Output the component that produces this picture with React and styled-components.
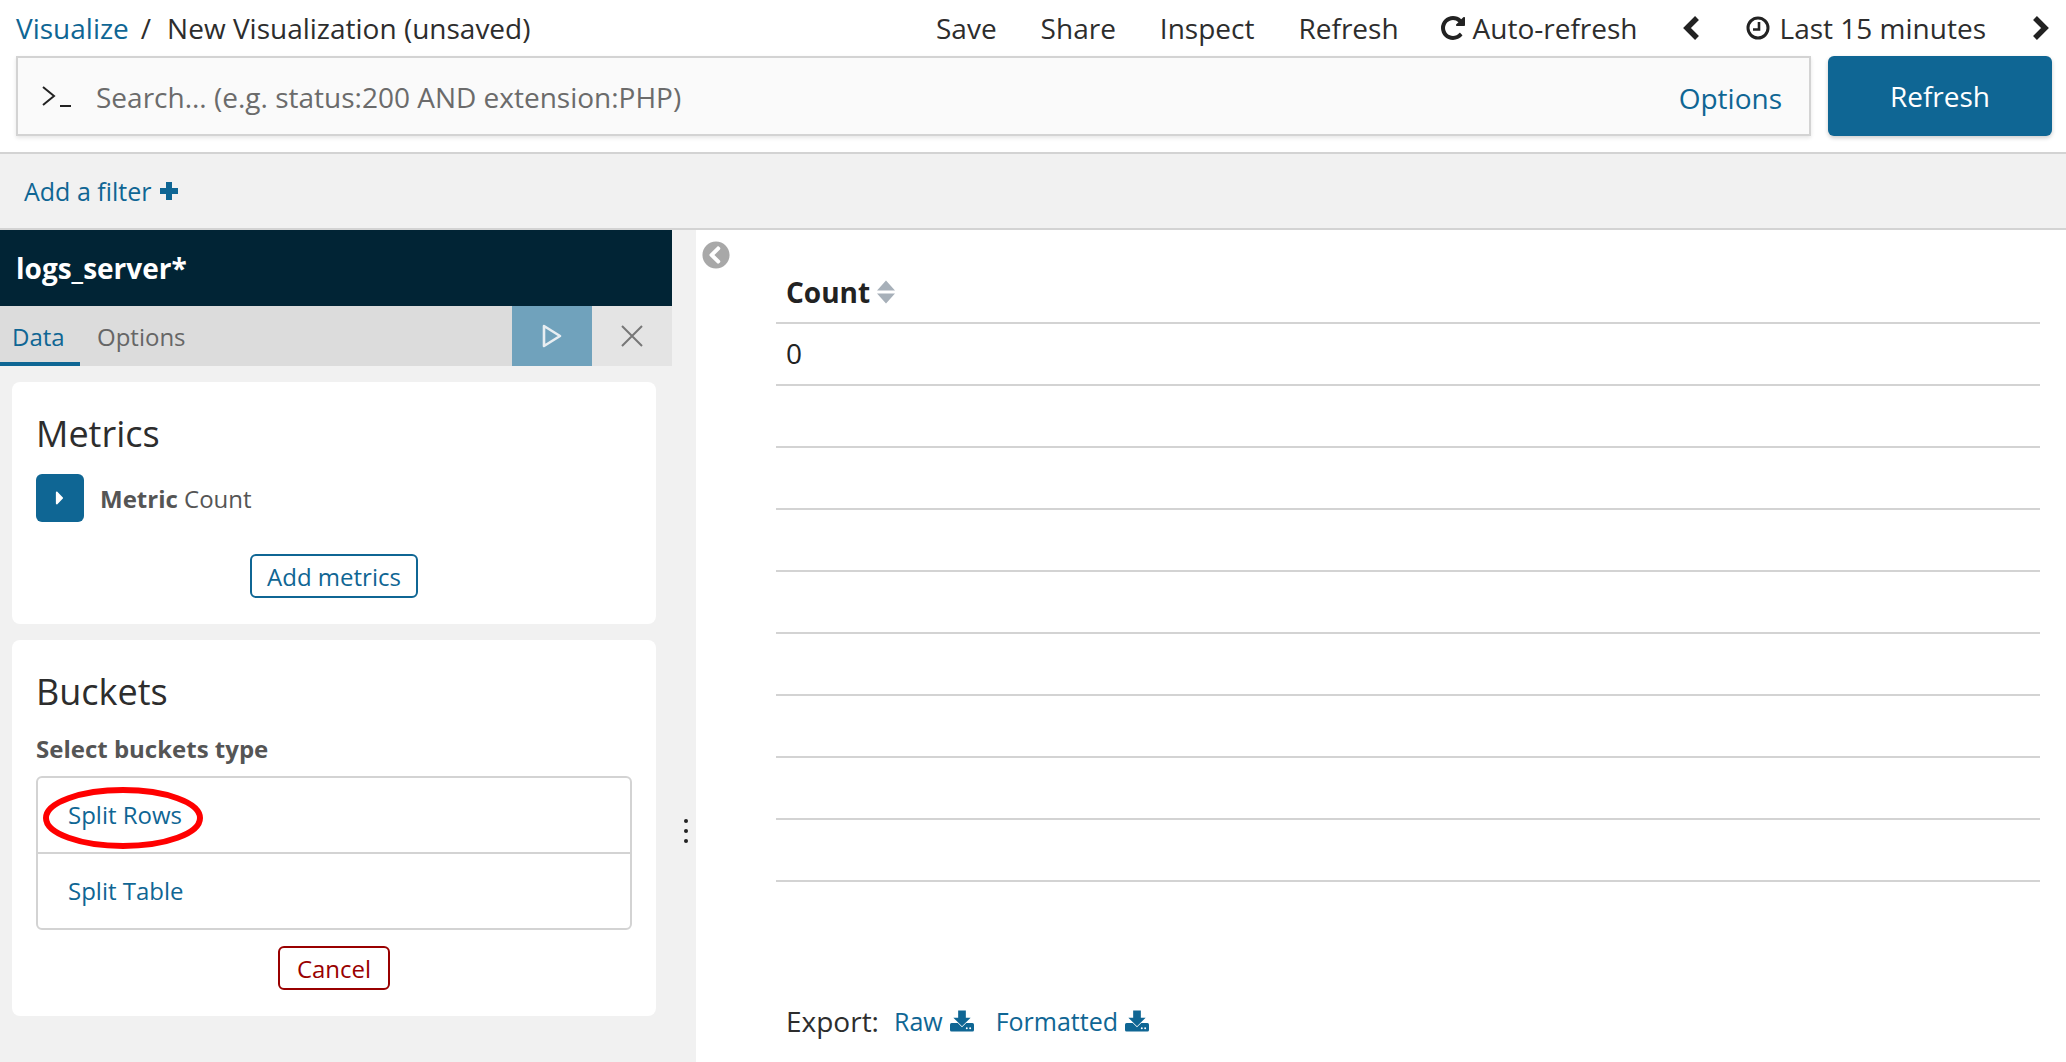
import React from 'react';
import styled, { createGlobalStyle } from 'styled-components';
import { FaChevronCircleLeft, FaCaretRight } from 'react-icons/fa';

const BLUE = '#0f6694';
const TEXT = '#2d2d2d';
const LINE = '#d3d3d3';

const GlobalStyle = createGlobalStyle`
  html, body {
    margin: 0;
    height: 100%;
    overflow: hidden;
    background: #fff;
    font-family: "Open Sans", "Noto Sans", sans-serif;
    color: ${TEXT};
  }
  * { box-sizing: border-box; }
`;

const Page = styled.div`
  width: 2066px;
  height: 1062px;
  display: flex;
  flex-direction: column;
  overflow: hidden;
`;

const TopNav = styled.div`
  height: 56px;
  display: flex;
  align-items: center;
  justify-content: space-between;
  padding: 0 17px 0 16px;
  font-size: 28px;
`;

const Crumbs = styled.div`
  display: flex;
  align-items: center;
  gap: 12px;
`;

const Separator = styled.span`
  margin-right: 4px;
`;

const BlueText = styled.span`
  color: ${BLUE};
`;

const NavItems = styled.div`
  display: flex;
  align-items: center;
  gap: 45px;
`;

const NavLinks = styled.div`
  display: flex;
  align-items: center;
  gap: 44px;
`;

const NavItem = styled.span`
  display: inline-flex;
  align-items: center;
  gap: ${(p) => p.$gap || 8}px;
  margin-left: ${(p) => p.$pull || 0}px;
`;

const SearchRow = styled.div`
  height: 96px;
  display: flex;
  gap: 17px;
  padding: 0 14px 0 16px;
`;

const SearchBox = styled.div`
  flex: 1;
  height: 80px;
  display: flex;
  align-items: center;
  background: #fafafa;
  border: 2px solid ${LINE};
  box-shadow: 0 2px 4px rgba(0, 0, 0, 0.1);
  padding: 0 27px 0 24px;
  font-size: 28px;
`;

const Prompt = styled.svg`
  width: 30px;
  height: 24px;
  margin-right: 24px;
`;

const Placeholder = styled.span`
  flex: 1;
  color: #6b6b6b;
  padding-top: 2px;
`;

const SearchOptions = styled(BlueText)`
  padding-top: 4px;
`;

const RefreshButton = styled.div`
  width: 224px;
  height: 80px;
  background: ${BLUE};
  color: #fff;
  border-radius: 6px;
  box-shadow: 0 2px 4px rgba(0, 0, 0, 0.2);
  display: flex;
  align-items: center;
  justify-content: center;
  font-size: 28px;
`;

const FilterBar = styled.div`
  height: 78px;
  display: flex;
  align-items: center;
  gap: 8px;
  padding: 0 24px;
  background: #f1f1f1;
  border-top: 2px solid ${LINE};
  border-bottom: 2px solid ${LINE};
  color: ${BLUE};
  font-size: 25px;
`;

const Main = styled.div`
  flex: 1;
  display: flex;
  min-height: 0;
`;

const Sidebar = styled.div`
  width: 696px;
  background: #f1f1f1;
  display: flex;
`;

const SideColumn = styled.div`
  width: 672px;
`;

const IndexHeader = styled.div`
  height: 76px;
  background: #012435;
  color: #fff;
  display: flex;
  align-items: center;
  padding-left: 16px;
  font-size: 28px;
  font-weight: 700;
`;

const TabBar = styled.div`
  height: 60px;
  background: #dcdcdc;
  display: flex;
`;

const Tab = styled.div`
  width: ${(p) => p.$width}px;
  display: flex;
  align-items: center;
  padding-left: ${(p) => p.$pad}px;
  padding-top: 4px;
  font-size: 24px;
  color: ${(p) => (p.$active ? BLUE : '#666')};
  border-bottom: 4px solid ${(p) => (p.$active ? BLUE : 'transparent')};
`;

const TabSpacer = styled.div`
  flex: 1;
`;

const TabAction = styled.div`
  width: 80px;
  display: flex;
  align-items: center;
  justify-content: center;
  background: ${(p) => (p.$primary ? '#70a2bc' : '#e4e4e4')};
`;

const Cards = styled.div`
  padding: 16px 16px 0 12px;
  display: flex;
  flex-direction: column;
  gap: 16px;
`;

const Card = styled.div`
  height: ${(p) => p.$height}px;
  background: #fff;
  border-radius: 8px;
  padding: 27px 24px 0;
  display: flex;
  flex-direction: column;
`;

const CardTitle = styled.div`
  font-size: 36px;
  line-height: 50px;
  color: ${TEXT};
`;

const MetricRow = styled.div`
  display: flex;
  align-items: center;
  gap: 16px;
  margin-top: 15px;
  font-size: 24px;
  color: #555;
`;

const MetricToggle = styled.div`
  width: 48px;
  height: 48px;
  border-radius: 6px;
  background: ${BLUE};
  color: #fff;
  display: flex;
  align-items: center;
  justify-content: center;
  font-size: 22px;
`;

const OutlineButton = styled.div`
  align-self: center;
  height: 44px;
  padding: 0 ${(p) => p.$pad}px;
  margin-top: ${(p) => p.$top}px;
  border: 2px solid ${(p) => p.$color};
  border-radius: 6px;
  color: ${(p) => p.$color};
  display: flex;
  align-items: center;
  font-size: 24px;
`;

const FieldLabel = styled.div`
  font-size: 24px;
  font-weight: 700;
  color: #555;
  margin-top: 15px;
  margin-bottom: 11px;
`;

const BucketList = styled.div`
  position: relative;
  height: 154px;
  border: 2px solid ${LINE};
  border-radius: 6px;
  display: flex;
  flex-direction: column;
`;

const BucketItem = styled.div`
  flex: 1;
  display: flex;
  align-items: center;
  padding: 0 0 2px 30px;
  font-size: 24px;
  color: ${BLUE};
  & + & { border-top: 2px solid ${LINE}; }
`;

const Annotation = styled.svg`
  position: absolute;
  left: 5px;
  top: 9px;
  width: 162px;
  height: 62px;
`;

const Splitter = styled.div`
  flex: 1;
  display: flex;
  flex-direction: column;
  align-items: center;
  gap: 6px;
  padding: 589px 0 0 4px;
`;

const Dot = styled.span`
  width: 4px;
  height: 4px;
  border-radius: 50%;
  background: #222;
`;

const Content = styled.div`
  position: relative;
  flex: 1;
  padding: 32px 26px 0 80px;
  display: flex;
  flex-direction: column;
`;

const Collapse = styled.div`
  position: absolute;
  left: 6px;
  top: 11px;
  color: #a8a8a8;
  font-size: 28px;
  line-height: 0;
`;

const Table = styled.div`
  display: flex;
  flex-direction: column;
`;

const Row = styled.div`
  height: 62px;
  border-bottom: 2px solid ${LINE};
  display: flex;
  align-items: center;
  gap: 7px;
  padding: 0 0 ${(p) => (p.$head ? 0 : 2)}px 10px;
  font-size: 28px;
  font-weight: ${(p) => (p.$head ? 700 : 400)};
  color: #222;
`;

const SortIcon = styled.svg`
  width: 18px;
  height: 24px;
`;

const ExportBar = styled.div`
  margin-top: 120px;
  padding-left: 10px;
  display: flex;
  align-items: center;
  font-size: 28px;
  color: ${TEXT};
`;

const ExportLink = styled.span`
  display: inline-flex;
  align-items: center;
  gap: 7px;
  margin-left: ${(p) => p.$left}px;
  font-size: 25px;
  color: ${BLUE};
`;

const RepeatIcon = () => (
  <svg width="24" height="24" viewBox="0 128 1536 1536" fill="#222">
    <path d="M1536 256v448q0 26-19 45t-45 19h-448q-42 0-59-40-17-39 14-69l138-138q-148-137-349-137-104 0-198.5 40.5t-163.5 109.5-109.5 163.5-40.5 198.5 40.5 198.5 109.5 163.5 163.5 109.5 198.5 40.5q119 0 225-52t179-147q7-10 23-12 15 0 25 9l137 138q9 8 9.5 20.5t-7.5 22.5q-109 132-264 204.5t-327 72.5q-156 0-298-61t-245-164-164-245-61-298 61-298 164-245 245-164 298-61q147 0 284.5 55.5t244.5 156.5l130-129q29-31 70-14 39 17 39 59z" />
  </svg>
);

const ClockIcon = () => (
  <svg width="24" height="24" viewBox="0 0 24 24" fill="none" stroke="#222" strokeWidth="3">
    <circle cx="12" cy="12" r="10" />
    <path d="M13 6v7.5H7" strokeWidth="2.6" />
  </svg>
);

const Chevron = ({ right }) => (
  <svg width="18" height="24" viewBox="0 0 18 24" fill="none" stroke="#222" strokeWidth="5.5">
    <path d={right ? 'M4 2l10 10L4 22' : 'M14 2L4 12l10 10'} />
  </svg>
);

const PlusIcon = () => (
  <svg width="20" height="20" viewBox="0 0 20 20" fill="none" stroke={BLUE} strokeWidth="6">
    <path d="M1 10h18M10 1v18" />
  </svg>
);

const DownloadIcon = () => (
  <svg width="24" height="22" viewBox="0 0 25 22">
    <rect y="13" width="25" height="9" rx="1.6" fill={BLUE} />
    <path d="M8.5 0h8v7.5h5L12.5 16.5 3.5 7.5h5z" fill={BLUE} stroke="#fff" strokeWidth="1.4" paintOrder="stroke" />
    <circle cx="17.5" cy="18.5" r="1" fill="#fff" />
    <circle cx="21" cy="18.5" r="1" fill="#fff" />
  </svg>
);

const EMPTY_ROWS = [1, 2, 3, 4, 5, 6, 7, 8];

export default function App() {
  return (
    <Page>
      <GlobalStyle />
      <TopNav>
        <Crumbs>
          <BlueText>Visualize</BlueText>
          <Separator>/</Separator>
          <span>New Visualization (unsaved)</span>
        </Crumbs>
        <NavItems>
          <NavLinks>
            <NavItem>Save</NavItem>
            <NavItem>Share</NavItem>
            <NavItem>Inspect</NavItem>
            <NavItem>Refresh</NavItem>
            <NavItem $pull={-2}>
              <RepeatIcon />
              Auto-refresh
            </NavItem>
          </NavLinks>
          <NavItem>
            <Chevron />
          </NavItem>
          <NavItem $gap={10}>
            <ClockIcon />
            Last 15 minutes
          </NavItem>
          <NavItem>
            <Chevron right />
          </NavItem>
        </NavItems>
      </TopNav>
      <SearchRow>
        <SearchBox>
          <Prompt viewBox="0 0 30 24" fill="none" stroke="#222" strokeWidth="2">
            <path d="M1 3l11 9-11 9" />
            <path d="M18 22h11" />
          </Prompt>
          <Placeholder>Search... (e.g. status:200 AND extension:PHP)</Placeholder>
          <SearchOptions>Options</SearchOptions>
        </SearchBox>
        <RefreshButton>Refresh</RefreshButton>
      </SearchRow>
      <FilterBar>
        Add a filter
        <PlusIcon />
      </FilterBar>
      <Main>
        <Sidebar>
          <SideColumn>
            <IndexHeader>logs_server*</IndexHeader>
            <TabBar>
              <Tab $active $width={80} $pad={12}>Data</Tab>
              <Tab $width={200} $pad={17}>Options</Tab>
              <TabSpacer />
              <TabAction $primary>
                <svg width="20" height="24" viewBox="0 0 20 24" fill="none" stroke="#e8eef2" strokeWidth="2.6" strokeLinejoin="round">
                  <path d="M2 2l16 10L2 22z" />
                </svg>
              </TabAction>
              <TabAction>
                <svg width="22" height="22" viewBox="0 0 22 22" fill="none" stroke="#777" strokeWidth="2">
                  <path d="M1 1l20 20M21 1L1 21" />
                </svg>
              </TabAction>
            </TabBar>
            <Cards>
              <Card $height={242}>
                <CardTitle>Metrics</CardTitle>
                <MetricRow>
                  <MetricToggle>
                    <FaCaretRight />
                  </MetricToggle>
                  <span>
                    <strong>Metric</strong> Count
                  </span>
                </MetricRow>
                <OutlineButton $color={BLUE} $pad={15} $top={32}>Add metrics</OutlineButton>
              </Card>
              <Card $height={376}>
                <CardTitle>Buckets</CardTitle>
                <FieldLabel>Select buckets type</FieldLabel>
                <BucketList>
                  <BucketItem>Split Rows</BucketItem>
                  <BucketItem>Split Table</BucketItem>
                  <Annotation viewBox="0 0 162 62" fill="none" stroke="#f00" strokeWidth="6">
                    <ellipse cx="80" cy="31" rx="77" ry="28" />
                  </Annotation>
                </BucketList>
                <OutlineButton $color="#900" $pad={17} $top={16}>Cancel</OutlineButton>
              </Card>
            </Cards>
          </SideColumn>
          <Splitter>
            <Dot />
            <Dot />
            <Dot />
          </Splitter>
        </Sidebar>
        <Content>
          <Collapse>
            <FaChevronCircleLeft />
          </Collapse>
          <Table>
            <Row $head>
              Count
              <SortIcon viewBox="0 0 18 24" fill="#a7b0b9">
                <path d="M9 0.5L18 10.5H0zM9 23.5L0 13.5h18z" />
              </SortIcon>
            </Row>
            <Row>0</Row>
            {EMPTY_ROWS.map((n) => (
              <Row key={n} />
            ))}
          </Table>
          <ExportBar>
            Export:
            <ExportLink $left={15}>
              Raw
              <DownloadIcon />
            </ExportLink>
            <ExportLink $left={22}>
              Formatted
              <DownloadIcon />
            </ExportLink>
          </ExportBar>
        </Content>
      </Main>
    </Page>
  );
}
